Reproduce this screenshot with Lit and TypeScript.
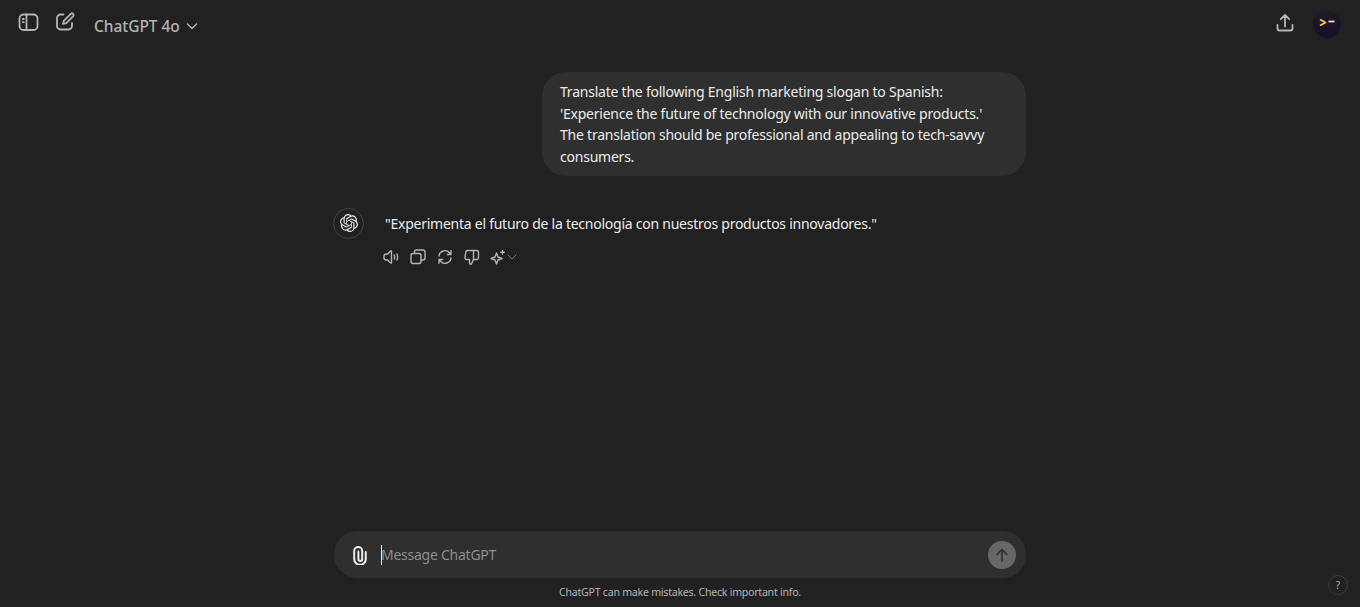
import { LitElement, html, css } from "lit";
import { customElement } from "lit/decorators.js";

const LOGO = "M22.2819 9.8211a5.9847 5.9847 0 0 0-.5157-4.9108 6.0462 6.0462 0 0 0-6.5098-2.9A6.0651 6.0651 0 0 0 4.9807 4.1818a5.9847 5.9847 0 0 0-3.9977 2.9 6.0462 6.0462 0 0 0 .7427 7.0966 5.98 5.98 0 0 0 .511 4.9107 6.051 6.051 0 0 0 6.5146 2.9001A5.9847 5.9847 0 0 0 13.2599 24a6.0557 6.0557 0 0 0 5.7718-4.2058 5.9894 5.9894 0 0 0 3.9977-2.9001 6.0557 6.0557 0 0 0-.7475-7.073zm-9.022 12.6081a4.4755 4.4755 0 0 1-2.8764-1.0408l.1419-.0804 4.7783-2.7582a.7948.7948 0 0 0 .3927-.6813v-6.7369l2.02 1.1686a.071.071 0 0 1 .038.052v5.5826a4.504 4.504 0 0 1-4.4945 4.4944zm-9.6607-4.1254a4.4708 4.4708 0 0 1-.5346-3.0137l.142.0852 4.783 2.7582a.7712.7712 0 0 0 .7806 0l5.8428-3.3685v2.3324a.0804.0804 0 0 1-.0332.0615L9.74 19.9502a4.4992 4.4992 0 0 1-6.1408-1.6464zM2.3408 7.8956a4.485 4.485 0 0 1 2.3655-1.9728V11.6a.7664.7664 0 0 0 .3879.6765l5.8144 3.3543-2.0201 1.1685a.0757.0757 0 0 1-.071 0l-4.8303-2.7865A4.504 4.504 0 0 1 2.3408 7.872zm16.5963 3.8558L13.1038 8.364 15.1192 7.2a.0757.0757 0 0 1 .071 0l4.8303 2.7913a4.4944 4.4944 0 0 1-.6765 8.1042v-5.6772a.79.79 0 0 0-.407-.667zm2.0107-3.0231l-.142-.0852-4.7735-2.7818a.7759.7759 0 0 0-.7854 0L9.409 9.2297V6.8974a.0662.0662 0 0 1 .0284-.0615l4.8303-2.7866a4.4992 4.4992 0 0 1 6.6802 4.66zM8.3065 12.863l-2.02-1.1638a.0804.0804 0 0 1-.038-.0567V6.0742a4.4992 4.4992 0 0 1 7.3757-3.4537l-.142.0805L8.704 5.459a.7948.7948 0 0 0-.3927.6813zm1.0976-2.3654l2.602-1.4998 2.6069 1.4998v2.9994l-2.5974 1.5l-2.6067-1.4997Z";

@customElement("app-root")
export class AppRoot extends LitElement {
  static styles = css`
    :host {
      display: flex;
      flex-direction: column;
      height: 100vh;
      position: relative;
      overflow: hidden;
      background: #212121;
      color: #ececec;
      font-family: "Noto Sans", sans-serif;
    }
    svg { display: block; fill: none; stroke: currentColor; stroke-linecap: round; stroke-linejoin: round; }
    .header {
      height: 50px;
      box-sizing: border-box;
      flex: none;
      display: flex;
      align-items: center;
      padding: 0 19px 4px 18px;
      color: #b4b4b4;
    }
    .model {
      display: flex;
      align-items: center;
      gap: 6px;
      margin: 6px 0 0 18px;
      font-size: 15.5px;
      font-weight: 500;
      letter-spacing: -0.05px;
    }
    .spacer { flex: 1; }
    .ic2 { margin-left: 14px; margin-top: -2px; }
    .avatar {
      width: 28px; height: 28px; border-radius: 50%;
      background: linear-gradient(#1f1b24, #1a0c2e);
      margin: 2px 0 0 17px;
      display: flex; align-items: center; justify-content: center;
    }
    .main { flex: 1; width: 692px; margin: 0 auto; min-height: 0; }
    .user { display: flex; justify-content: flex-end; padding-top: 22px; }
    .bubble {
      width: 484px; box-sizing: border-box;
      background: #2f2f2f;
      border-radius: 24px;
      padding: 9px 18px 8.3px;
      font-size: 14px;
      line-height: 21.67px;
      color: #ececec;
      letter-spacing: -0.23px;
    }
    .bot { display: flex; margin-top: 32px; gap: 21px; margin-left: -1px; }
    .logo {
      width: 31px; height: 31px; flex: none; box-sizing: border-box;
      border: 1px solid #444; border-radius: 50%;
      display: flex; align-items: center; justify-content: center; color: #ececec;
    }
    .answer { padding-top: 5px; font-size: 14px; line-height: 22px; letter-spacing: -0.25px; }
    .actions { display: flex; align-items: center; gap: 9px; margin-top: 13px; margin-left: -3px; color: #b4b4b4; }
    .sparkle { display: flex; align-items: center; }
    .sparkle-chev { color: #777; margin-left: 1px; }
    .composer {
      flex: none;
      box-sizing: border-box;
      width: 692px; height: 47px; margin: 0 auto;
      background: #2f2f2f; border-radius: 24px;
      display: flex; align-items: center;
      padding: 0 10px 0 16px;
    }
    .clip { color: #ececec; }
    .caret { width: 1px; height: 20px; background: #ececec; margin: 0 -1px 0 11px; }
    .placeholder { flex: 1; font-size: 14px; color: #8e8e8e; letter-spacing: -0.25px; }
    .send {
      width: 28px; height: 28px; border-radius: 50%; background: #676767; color: #2f2f2f;
      display: flex; align-items: center; justify-content: center;
    }
    .foot {
      flex: none; height: 29px; box-sizing: border-box; padding-bottom: 2px;
      display: flex; align-items: center; justify-content: center;
      font-size: 10.6px; color: #b4b4b4; letter-spacing: -0.25px;
    }
    .help {
      position: absolute; right: 12px; bottom: 12px;
      width: 20px; height: 20px; box-sizing: border-box; border: 1px solid #3c3c3c; border-radius: 50%;
      display: flex; align-items: center; justify-content: center;
      font-size: 10px; color: #b4b4b4;
    }
  `;

  render() {
    return html`
      <div class="header">
        <svg width="22" height="22" viewBox="0 0 22 22" stroke-width="1.8">
          <rect x="1.5" y="2.5" width="18" height="15.5" rx="4"></rect>
          <path d="M8.5 2.5v15.5M4.8 7h1M4.8 10.2h1"></path>
        </svg>
        <svg class="ic2" width="22" height="22" viewBox="0 0 22 22" stroke-width="1.8">
          <path d="M9.5 3.5H6.5a3.5 3.5 0 0 0-3.5 3.5v8a3.5 3.5 0 0 0 3.5 3.5h8a3.5 3.5 0 0 0 3.5-3.5v-3"></path>
          <path d="M16.8 2.8a1.7 1.7 0 0 1 2.4 2.4L12.3 12.2l-3.3.8.8-3.2z"></path>
        </svg>
        <div class="model">
          <span>ChatGPT 4o</span>
          <svg width="12" height="12" viewBox="0 0 12 12" stroke-width="1.4"><path d="M1.5 4l4.5 4.5L10.5 4"></path></svg>
        </div>
        <div class="spacer"></div>
        <svg width="22" height="22" viewBox="0 0 22 22" stroke-width="1.8">
          <path d="M11 14.5V3M6.8 7.2 11 3l4.2 4.2M3.5 13v3.5a2 2 0 0 0 2 2h11a2 2 0 0 0 2-2V13"></path>
        </svg>
        <div class="avatar">
          <svg width="18" height="10" viewBox="0 0 18 10" stroke-width="1.8">
            <path d="M2 .5 7.5 3.5 2 6.5" stroke="#f5c94c" stroke-linecap="butt"></path>
            <path d="M10.5 2.5h6" stroke="#f0e4c0" stroke-linecap="butt"></path>
          </svg>
        </div>
      </div>

      <div class="main">
        <div class="user">
          <div class="bubble">
            Translate the following English marketing slogan to Spanish:<br />
            'Experience the future of technology with our innovative products.'<br />
            The translation should be professional and appealing to tech-savvy consumers.
          </div>
        </div>
        <div class="bot">
          <div class="logo">
            <svg width="18" height="18" viewBox="0 0 24 24" style="stroke:none;fill:currentColor"><path d=${LOGO}></path></svg>
          </div>
          <div>
            <div class="answer">"Experimenta el futuro de la tecnología con nuestros productos innovadores."</div>
            <div class="actions">
              <svg width="18" height="18" viewBox="0 0 18 18" stroke-width="1.4">
                <path d="M9.5 3v12c-1.5 0-2.5-1-3.5-3H4.2C3 12 2 11 2 9.8V8.2C2 7 3 6 4.2 6H6c1-2 2-3 3.5-3z"></path>
                <path d="M12.3 7c.5 1.3.5 2.7 0 4M15 6c.8 2 .8 4 0 6"></path>
              </svg>
              <svg width="18" height="18" viewBox="0 0 18 18" stroke-width="1.4">
                <rect x="2" y="5.5" width="10" height="10" rx="2"></rect>
                <path d="M5.5 5.5V4a2 2 0 0 1 2-2H14a2 2 0 0 1 2 2v6a2 2 0 0 1-2 2h-2"></path>
              </svg>
              <svg width="18" height="18" viewBox="0 0 18 18" stroke-width="1.4">
                <path d="M3 8a6 6 0 0 1 10.5-3.2L15 6.5M15 2.8v3.7h-3.7"></path>
                <path d="M15 10a6 6 0 0 1-10.5 3.2L3 11.5M3 15.2v-3.7h3.7"></path>
              </svg>
              <svg width="18" height="18" viewBox="0 0 18 18" stroke-width="1.4">
                <path d="M6.5 11.5v3a1.8 1.8 0 0 0 1.8 1.8l2.2-4.8V2.5H4.3a1.5 1.5 0 0 0-1.5 1.3L2 9.8a1.5 1.5 0 0 0 1.5 1.7z"></path>
                <path d="M10.5 2.5h3.3A1.7 1.7 0 0 1 15.5 4.2v5.6a1.7 1.7 0 0 1-1.7 1.7h-3.3"></path>
              </svg>
              <div class="sparkle">
                <svg width="16" height="16" viewBox="0 0 16 16" stroke-width="1.4">
                  <path d="M6.5 4 8 8l4 1.5L8 11l-1.5 4L5 11 1 9.5 5 8z"></path>
                  <path d="M12.5 1.5v3.5M10.8 3.2h3.5"></path>
                </svg>
                <svg class="sparkle-chev" width="10" height="10" viewBox="0 0 10 10" stroke-width="1"><path d="M1 3l4 4 4-4"></path></svg>
              </div>
            </div>
          </div>
        </div>
      </div>

      <div class="composer">
        <svg class="clip" width="20" height="20" viewBox="0 0 20 20" stroke-width="2">
          <path d="M15.8 7v7a5.8 5.8 0 0 1-11.6 0V6a4 4 0 0 1 8 0v8a1.9 1.9 0 0 1-3.8 0V6.5"></path>
        </svg>
        <span class="caret"></span>
        <span class="placeholder">Message ChatGPT</span>
        <div class="send">
          <svg width="16" height="16" viewBox="0 0 16 16" stroke-width="1.7"><path d="M8 14V2.5M3 7.5l5-5 5 5"></path></svg>
        </div>
      </div>
      <div class="foot">ChatGPT can make mistakes. Check important info.</div>
      <div class="help">?</div>
    `;
  }
}
